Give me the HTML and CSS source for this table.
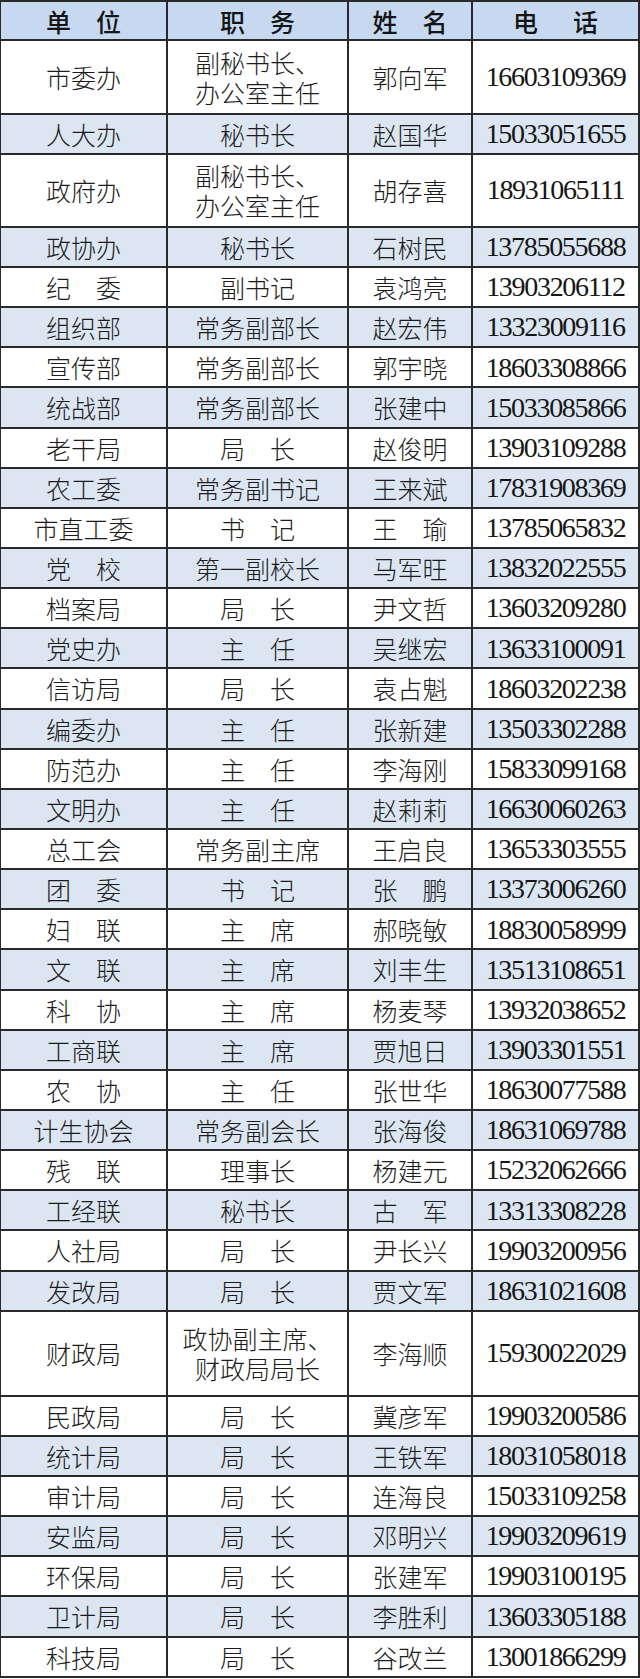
FILE: index.html
```html
<!DOCTYPE html>
<html lang="zh-CN">
<head>
<meta charset="utf-8">
<title>通讯录</title>
<link rel="stylesheet" href="styles.css">
</head>
<body>
<div class="sheet">
  <div class="row head">
    <div class="cell">单　位</div><div class="cell">职　务</div><div class="cell">姓　名</div><div class="cell tel-head">电　话</div>
  </div>
  <div class="row r-74"><div class="cell">市委办</div><div class="cell two">副秘书长、<br>办公室主任</div><div class="cell">郭向军</div><div class="cell num">16603109369</div></div>
  <div class="row blue r-39"><div class="cell">人大办</div><div class="cell">秘书长</div><div class="cell">赵国华</div><div class="cell num">15033051655</div></div>
  <div class="row r-73"><div class="cell">政府办</div><div class="cell two">副秘书长、<br>办公室主任</div><div class="cell">胡存喜</div><div class="cell num">18931065111</div></div>
  <div class="row blue r-41"><div class="cell">政协办</div><div class="cell">秘书长</div><div class="cell">石树民</div><div class="cell num">13785055688</div></div>
  <div class="row"><div class="cell">纪　委</div><div class="cell">副书记</div><div class="cell">袁鸿亮</div><div class="cell num">13903206112</div></div>
  <div class="row blue"><div class="cell">组织部</div><div class="cell">常务副部长</div><div class="cell">赵宏伟</div><div class="cell num">13323009116</div></div>
  <div class="row"><div class="cell">宣传部</div><div class="cell">常务副部长</div><div class="cell">郭宇晓</div><div class="cell num">18603308866</div></div>
  <div class="row blue"><div class="cell">统战部</div><div class="cell">常务副部长</div><div class="cell">张建中</div><div class="cell num">15033085866</div></div>
  <div class="row"><div class="cell">老干局</div><div class="cell">局　长</div><div class="cell">赵俊明</div><div class="cell num">13903109288</div></div>
  <div class="row blue"><div class="cell">农工委</div><div class="cell">常务副书记</div><div class="cell">王来斌</div><div class="cell num">17831908369</div></div>
  <div class="row"><div class="cell">市直工委</div><div class="cell">书　记</div><div class="cell">王　瑜</div><div class="cell num">13785065832</div></div>
  <div class="row blue"><div class="cell">党　校</div><div class="cell">第一副校长</div><div class="cell">马军旺</div><div class="cell num">13832022555</div></div>
  <div class="row"><div class="cell">档案局</div><div class="cell">局　长</div><div class="cell">尹文哲</div><div class="cell num">13603209280</div></div>
  <div class="row blue"><div class="cell">党史办</div><div class="cell">主　任</div><div class="cell">吴继宏</div><div class="cell num">13633100091</div></div>
  <div class="row"><div class="cell">信访局</div><div class="cell">局　长</div><div class="cell">袁占魁</div><div class="cell num">18603202238</div></div>
  <div class="row blue"><div class="cell">编委办</div><div class="cell">主　任</div><div class="cell">张新建</div><div class="cell num">13503302288</div></div>
  <div class="row"><div class="cell">防范办</div><div class="cell">主　任</div><div class="cell">李海刚</div><div class="cell num">15833099168</div></div>
  <div class="row blue"><div class="cell">文明办</div><div class="cell">主　任</div><div class="cell">赵莉莉</div><div class="cell num">16630060263</div></div>
  <div class="row"><div class="cell">总工会</div><div class="cell">常务副主席</div><div class="cell">王启良</div><div class="cell num">13653303555</div></div>
  <div class="row blue"><div class="cell">团　委</div><div class="cell">书　记</div><div class="cell">张　鹏</div><div class="cell num">13373006260</div></div>
  <div class="row"><div class="cell">妇　联</div><div class="cell">主　席</div><div class="cell">郝晓敏</div><div class="cell num">18830058999</div></div>
  <div class="row blue"><div class="cell">文　联</div><div class="cell">主　席</div><div class="cell">刘丰生</div><div class="cell num">13513108651</div></div>
  <div class="row"><div class="cell">科　协</div><div class="cell">主　席</div><div class="cell">杨麦琴</div><div class="cell num">13932038652</div></div>
  <div class="row blue"><div class="cell">工商联</div><div class="cell">主　席</div><div class="cell">贾旭日</div><div class="cell num">13903301551</div></div>
  <div class="row"><div class="cell">农　协</div><div class="cell">主　任</div><div class="cell">张世华</div><div class="cell num">18630077588</div></div>
  <div class="row blue"><div class="cell">计生协会</div><div class="cell">常务副会长</div><div class="cell">张海俊</div><div class="cell num">18631069788</div></div>
  <div class="row"><div class="cell">残　联</div><div class="cell">理事长</div><div class="cell">杨建元</div><div class="cell num">15232062666</div></div>
  <div class="row blue"><div class="cell">工经联</div><div class="cell">秘书长</div><div class="cell">古　军</div><div class="cell num">13313308228</div></div>
  <div class="row"><div class="cell">人社局</div><div class="cell">局　长</div><div class="cell">尹长兴</div><div class="cell num">19903200956</div></div>
  <div class="row blue"><div class="cell">发改局</div><div class="cell">局　长</div><div class="cell">贾文军</div><div class="cell num">18631021608</div></div>
  <div class="row r-85"><div class="cell">财政局</div><div class="cell two">政协副主席、<br>财政局局长</div><div class="cell">李海顺</div><div class="cell num">15930022029</div></div>
  <div class="row"><div class="cell">民政局</div><div class="cell">局　长</div><div class="cell">冀彦军</div><div class="cell num">19903200586</div></div>
  <div class="row blue"><div class="cell">统计局</div><div class="cell">局　长</div><div class="cell">王铁军</div><div class="cell num">18031058018</div></div>
  <div class="row"><div class="cell">审计局</div><div class="cell">局　长</div><div class="cell">连海良</div><div class="cell num">15033109258</div></div>
  <div class="row blue"><div class="cell">安监局</div><div class="cell">局　长</div><div class="cell">邓明兴</div><div class="cell num">19903209619</div></div>
  <div class="row"><div class="cell">环保局</div><div class="cell">局　长</div><div class="cell">张建军</div><div class="cell num">19903100195</div></div>
  <div class="row blue"><div class="cell">卫计局</div><div class="cell">局　长</div><div class="cell">李胜利</div><div class="cell num">13603305188</div></div>
  <div class="row"><div class="cell">科技局</div><div class="cell">局　长</div><div class="cell">谷改兰</div><div class="cell num">13001866299</div></div>
</div>
</body>
</html>
```
FILE: styles.css
```css
html, body {
  margin: 0;
  padding: 0;
  background: #ffffff;
}

.sheet {
  width: 640px;
  box-sizing: border-box;
  border-top: 2px solid #2a2a2a;
  border-left: 1px solid #2a2a2a;
  border-right: 2px solid #2a2a2a;
  font-family: "Noto Sans CJK SC", "Noto Sans", sans-serif;
  font-weight: 300;
  color: #1c1c1c;
  display: flex;
  flex-direction: column;
}

.row {
  display: grid;
  grid-template-columns: 167px 181px 124px 1fr;
  height: 40.15px;
  box-sizing: border-box;
  border-bottom: 2px solid #2a2a2a;
  background: #ffffff;
}

.row.blue {
  background: #dce6f2;
}

.row.head {
  height: 39px;
  background: #c6d9f0;
}

.row.r-74 { height: 74px; }
.row.r-73 { height: 73px; }
.row.r-39 { height: 39.5px; }
.row.r-41 { height: 40.5px; }
.row.r-85 { height: 85px; }

.cell {
  display: flex;
  align-items: center;
  justify-content: center;
  text-align: center;
  box-sizing: border-box;
  border-right: 2px solid #2a2a2a;
  font-size: 25px;
  line-height: 1.2;
  white-space: nowrap;
}

.cell:last-child {
  border-right: 0;
}

.head .cell {
  font-weight: 500;
  color: #151515;
}

.head .tel-head {
  letter-spacing: 5px;
  padding-left: 5px;
}

.cell.two {
  line-height: 30px;
}

.cell.num {
  font-family: "Liberation Serif", "Times New Roman", serif;
  font-weight: 400;
  font-size: 28px;
  letter-spacing: -1.3px;
  color: #161616;
}
```
